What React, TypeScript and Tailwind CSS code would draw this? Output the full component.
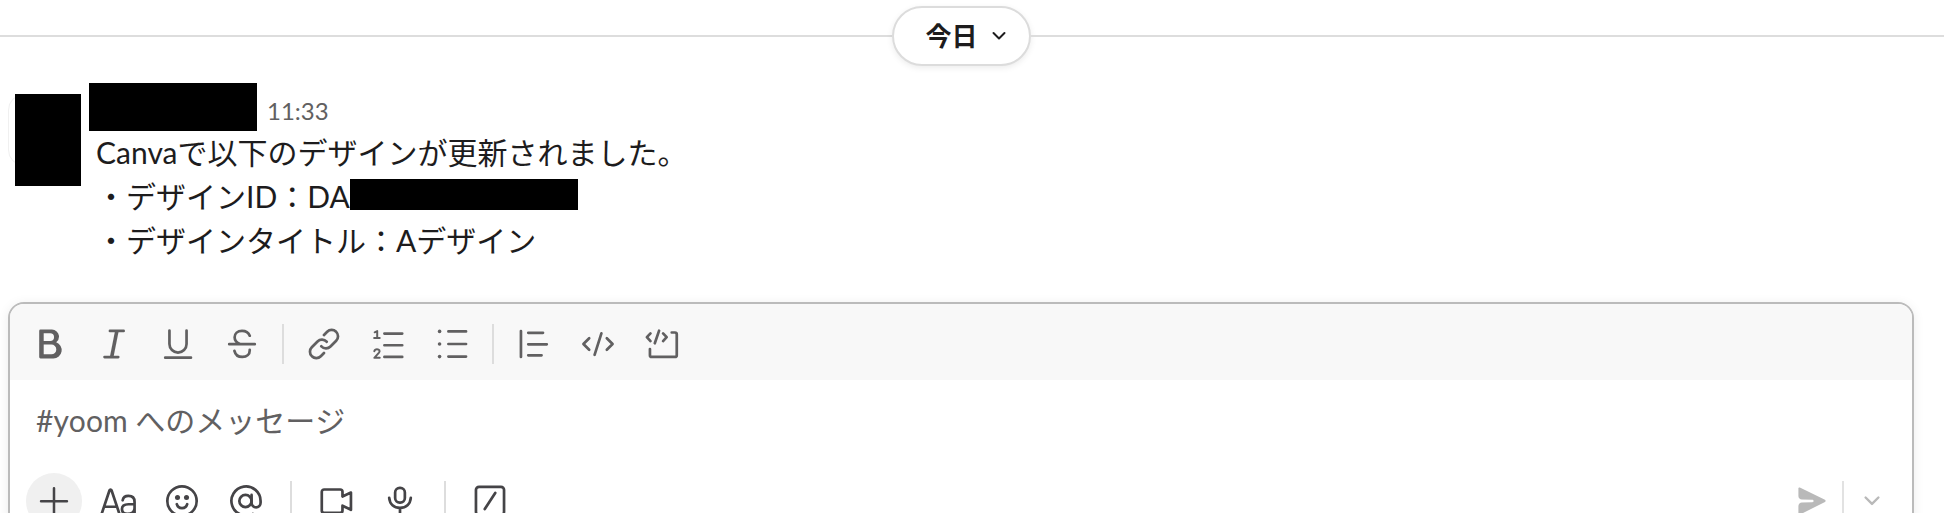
import type { ReactNode } from "react";

function Icon({ children, className = "size-9" }: { children: ReactNode; className?: string }) {
  return (
    <svg
      viewBox="0 0 20 20"
      className={className}
      fill="none"
      stroke="currentColor"
      strokeWidth="1.5"
      strokeLinecap="round"
      strokeLinejoin="round"
      aria-hidden="true"
    >
      {children}
    </svg>
  );
}

function Tool({ label, children }: { label: string; children: ReactNode }) {
  return (
    <button type="button" aria-label={label} className="flex h-14 w-14 shrink-0 items-center justify-center rounded-lg">
      <Icon>{children}</Icon>
    </button>
  );
}

function FormatBar() {
  return (
    <div className="flex items-center gap-2 rounded-t-[14px] bg-[#f8f8f8] px-3 pt-3 pb-2 text-[#616061]">
      <Tool label="太字">
        <path
          fill="currentColor"
          stroke="none"
          fillRule="evenodd"
          clipRule="evenodd"
          d="M4 2.75A.75.75 0 0 1 4.75 2h6.343a3.91 3.91 0 0 1 3.88 3.449A2 2 0 0 1 15 5.84l.001.067a3.9 3.9 0 0 1-1.551 3.118A4.627 4.627 0 0 1 11.875 18H4.75a.75.75 0 0 1-.75-.75V9.5a.8.8 0 0 1 .032-.218A.8.8 0 0 1 4 9.065zm2.5 5.565h3.593a2.157 2.157 0 1 0 0-4.315H6.5zm4.25 1.935H6.5v5.5h4.25a2.75 2.75 0 1 0 0-5.5"
        />
      </Tool>
      <Tool label="斜体">
        <path d="M7.75 2.75h7.6M4.75 17.25h7.6" />
        <path strokeWidth="2" strokeLinecap="butt" d="M11.6 2.75l-2.9 14.5" />
      </Tool>
      <Tool label="下線">
        <path d="M5.25 2.5V10a4.75 4.75 0 0 0 9.5 0V2.5M2.9 17.6h14.3" />
      </Tool>
      <Tool label="取り消し線">
        <path d="M14.3 5.4C13.6 3.6 12 2.75 10 2.75c-2.5 0-4.1 1.55-4.1 3.55 0 1.8 1.1 3 3 3.7M2.9 10.1h14.2M5.8 13.8c.5 2.2 2.1 3.4 4.4 3.4 2.5 0 4.2-1.4 4.1-4" />
      </Tool>
      <span className="mx-1 h-10 w-0.5 bg-[#dddddd]" />
      <Tool label="リンク">
        <path
          fill="currentColor"
          stroke="none"
          d="M12.306 3.756a2.75 2.75 0 0 1 3.889 0l.05.05a2.75 2.75 0 0 1 0 3.889l-3.18 3.18a2.75 2.75 0 0 1-3.98-.095l-.03-.034a.75.75 0 0 0-1.11 1.009l.03.034a4.25 4.25 0 0 0 6.15.146l3.18-3.18a4.25 4.25 0 0 0 0-6.01l-.05-.05a4.25 4.25 0 0 0-6.01 0L9.47 4.47a.75.75 0 1 0 1.06 1.06zm-4.611 12.49a2.75 2.75 0 0 1-3.89 0l-.05-.051a2.75 2.75 0 0 1 0-3.89l3.18-3.179a2.75 2.75 0 0 1 3.98.095l.03.034a.75.75 0 1 0 1.11-1.01l-.03-.033a4.25 4.25 0 0 0-6.15-.146l-3.18 3.18a4.25 4.25 0 0 0 0 6.01l.05.05a4.25 4.25 0 0 0 6.01 0l1.775-1.775a.75.75 0 0 0-1.06-1.06z"
        />
      </Tool>
      <Tool label="順序付きリスト">
        <path d="M8 4.2h9.9M8 10.7h9.9M8 17.2h9.9" />
        <path strokeWidth="1.1" d="M2.6 3.5l1.4-.7v3.9M2.3 6.7h3.1M2.4 14c.2-.8.8-1.1 1.5-1.1 1.3 0 1.8 1 1.1 1.9l-2.6 2.9h3" />
      </Tool>
      <Tool label="箇条書き">
        <path d="M8 3h9.8M8 10h9.8M8 17h9.8" />
        <g fill="currentColor" stroke="none">
          <circle cx="3.1" cy="3" r="1" />
          <circle cx="3.1" cy="10" r="1" />
          <circle cx="3.1" cy="17" r="1" />
        </g>
      </Tool>
      <span className="mx-1 h-10 w-0.5 bg-[#dddddd]" />
      <Tool label="引用">
        <path d="M2.75 2.8v14.4M6.8 3.8H15M6.8 10.2h10.3M6.8 16.3h7.4" />
      </Tool>
      <Tool label="コード">
        <path d="M5.1 6.8L1.9 10l3.2 3.2M14.9 6.8l3.2 3.2-3.2 3.2M11.9 4.1L8.1 16" />
      </Tool>
      <Tool label="コードブロック">
        <path d="M3.6 4.1L1.6 6.2l2 2.2M8.4 2.6L6 9.6M10.6 4.1l2 2.1-2 2.2M15.4 3.6h1.8a1 1 0 0 1 1 1v11.6a1 1 0 0 1-1 1H4.3a1 1 0 0 1-1-1v-3.4" />
      </Tool>
    </div>
  );
}

function ActionBar() {
  return (
    <div className="flex items-center gap-2 px-4 pb-3 text-[#454447]">
      <button type="button" aria-label="追加" className="flex size-14 items-center justify-center rounded-full bg-[#f0f0f0]">
        <Icon>
          <path strokeWidth="1.4" d="M10 2.9v14.4M2.8 10.1h14.4" />
        </Icon>
      </button>
      <Tool label="書式設定を非表示にする">
        <path d="M.9 17.2L5.3 4c.2-.5.9-.5 1.1 0l4.4 13.2M2.4 13.2h6.9" />
        <path d="M12.6 9.6c.3-1.6 1.5-2.4 3.2-2.4 2.1 0 3.4 1.2 3.4 3.3v6.7M19.2 11.8h-3.4c-2.2 0-3.6 1-3.6 2.7s1.2 2.7 3 2.7c2.2 0 4-1.3 4-3.4" />
      </Tool>
      <Tool label="絵文字">
        <circle cx="10" cy="10" r="8.15" />
        <g fill="currentColor" stroke="none">
          <circle cx="7.5" cy="8" r="1.4" />
          <circle cx="12.5" cy="8" r="1.4" />
        </g>
        <path d="M7.1 11.8c.4 1.4 1.5 2.2 2.9 2.2s2.5-.8 2.9-2.2" />
      </Tool>
      <Tool label="メンション">
        <circle cx="9.7" cy="10" r="3.4" />
        <path d="M13.1 6.6V11a2.5 2.5 0 0 0 5 0v-1a8.1 8.1 0 1 0-4.3 7.15" />
      </Tool>
      <span className="mx-2 h-10 w-0.5 bg-[#dddddd]" />
      <Tool label="ビデオクリップ">
        <path d="M13.6 7.5V4.9a1.3 1.3 0 0 0-1.3-1.3H3.4a1.3 1.3 0 0 0-1.3 1.3v10.4a1.3 1.3 0 0 0 1.3 1.3h8.9a1.3 1.3 0 0 0 1.3-1.3v-2.7l4.7 2.3V5.3z" />
      </Tool>
      <Tool label="音声クリップ">
        <rect x="7.3" y="2.7" width="5.4" height="8.2" rx="2.6" />
        <path d="M4 8.3c.3 3.4 2.6 5.5 6 5.5s5.7-2.1 6-5.5M10 13.8v3.7M7.5 17.5h5" />
      </Tool>
      <span className="mx-2 h-10 w-0.5 bg-[#dddddd]" />
      <Tool label="ショートカット">
        <rect x="2.2" y="2.1" width="15.6" height="15.6" rx="1.7" />
        <path d="M12.9 5.5L7.1 14.5" />
      </Tool>
      <div className="ml-auto flex items-center text-[#b9b9b9]">
        <button type="button" aria-label="送信" className="flex h-14 w-[52px] items-center justify-center">
          <Icon className="size-8">
            <path
              fill="currentColor"
              stroke="none"
              d="M1.5 2.106c0-.462.498-.754.901-.528l15.7 7.714a.73.73 0 0 1 .006 1.307L2.501 18.46l-.07.017a.754.754 0 0 1-.931-.733v-4.572c0-1.22.971-2.246 2.213-2.268l6.542-.17c.27-.01.75-.24.75-.737 0-.498-.483-.738-.75-.738l-6.546-.16C2.47 9.076 1.5 8.05 1.5 6.832z"
            />
          </Icon>
        </button>
        <span className="mx-1 h-10 w-0.5 bg-[#e2e2e2]" />
        <button type="button" aria-label="送信オプション" className="flex h-14 w-12 items-center justify-center">
          <Icon className="size-8">
            <path d="M6 7.8l4 4 4-4" />
          </Icon>
        </button>
      </div>
    </div>
  );
}

export default function App() {
  return (
    <div className="h-screen overflow-hidden bg-white font-['Lato','Noto_Sans_CJK_JP',sans-serif] text-[30px] leading-[44px] text-[#1d1c1d]">
      <div className="flex items-center pt-1.5 pr-[22px]">
        <span className="h-0.5 flex-1 bg-[#dddddd]" />
        <button
          type="button"
          className="flex h-[60px] items-center gap-[11px] rounded-full border-2 border-[#dcdcdc] bg-white pr-5 pl-8 text-[26px] font-bold shadow-[0_2px_6px_rgba(0,0,0,0.08)]"
        >
          今日
          <Icon className="size-5">
            <path strokeWidth="2" d="M4.5 7l5.5 5.5L15.5 7" />
          </Icon>
        </button>
        <div className="flex-1">
          <span className="block h-0.5 w-[calc(100%+22px)] bg-[#dddddd]" />
        </div>
      </div>

      <article className="mt-[17px] flex gap-4 pl-2">
        <div className="relative mt-[11px] size-[72px] shrink-0 rounded-2xl border border-[#f0f0f0]">
          <span className="absolute top-[-1px] left-1.5 h-[92px] w-[66px] bg-black" />
        </div>
        <div className="min-w-0">
          <div className="flex items-center gap-[10px]">
            <span className="ml-[-7px] h-12 w-[168px] bg-black" />
            <time className="pt-2 text-2xl text-[#616061]">11:33</time>
          </div>
          <div className="-mt-px">
            <p>Canvaで以下のデザインが更新されました。</p>
            <p className="flex">
              ・デザインID：DA
              <span className="mt-[5px] h-[31px] w-[228px] bg-black" />
            </p>
            <p>・デザインタイトル：Aデザイン</p>
          </div>
        </div>
      </article>

      <form className="mt-10 mr-[30px] ml-2 rounded-2xl border-2 border-[#bbbbbb] bg-white shadow-[0_2px_12px_rgba(0,0,0,0.08)]">
        <FormatBar />
        <textarea
          aria-label="#yoom へのメッセージ"
          placeholder="#yoom へのメッセージ"
          rows={1}
          className="block h-[93px] w-full resize-none px-[26px] pt-[18px] outline-none [font-kerning:none] placeholder:text-[#616061]"
        />
        <ActionBar />
      </form>
    </div>
  );
}
